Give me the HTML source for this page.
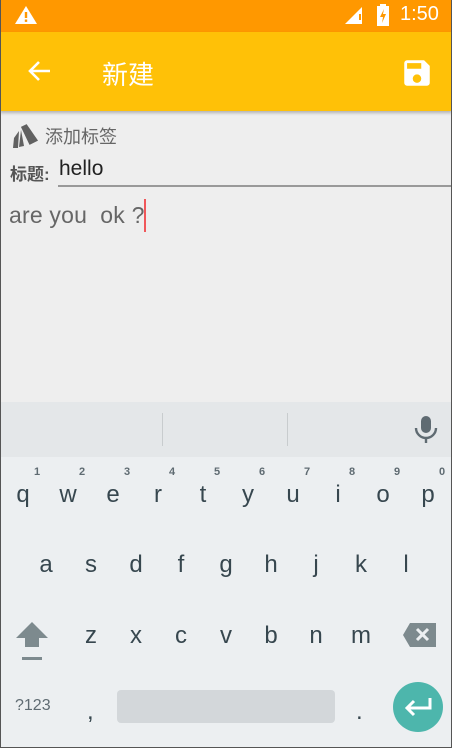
<!DOCTYPE html>
<html><head><meta charset="utf-8"><style>
body{margin:0;width:452px;height:748px;position:relative;overflow:hidden;background:#eeeeee;font-family:"Liberation Sans","Noto Sans CJK SC",sans-serif}
.a{position:absolute}
.k{position:absolute;width:40px;margin-left:-20px;text-align:center;font-size:24px;color:#37474f;line-height:1}
.n{position:absolute;width:20px;margin-left:-10px;text-align:center;font-size:11px;font-weight:bold;color:#5f6b72;line-height:1}
</style></head><body>
<div class="a" style="left:0;top:0;width:452px;height:32px;background:#ff9800"></div>
<svg class="a" style="left:14px;top:5px" width="24" height="20" viewBox="0 0 24 20"><path d="M12 1L23 19H1Z" fill="#fff"/><rect x="10.8" y="7" width="2.4" height="6" fill="#ff9800"/><rect x="10.8" y="14.5" width="2.4" height="2.4" fill="#ff9800"/></svg>
<svg class="a" style="left:345px;top:6px" width="20" height="20"><path d="M0 18L17 1V18Z" fill="#fff"/><rect x="14" y="8" width="2" height="6" fill="#ff9800"/></svg>
<svg class="a" style="left:376px;top:4px" width="14" height="22"><rect x="4" y="0" width="6" height="3" fill="#fff"/><rect x="1" y="2" width="12" height="20" fill="#fff"/><path d="M8 5L4 13H7L6 19L10 10H7Z" fill="#ff9800"/></svg>
<div class="a" style="left:400px;top:3px;font-size:20px;color:#fff">1:50</div>
<div class="a" style="left:0;top:32px;width:452px;height:79px;background:#ffc107;box-shadow:0 2px 3px rgba(0,0,0,.25)"></div>
<svg class="a" style="left:26px;top:59px" width="26" height="24" viewBox="0 0 26 24"><path d="M24 12H4M13 3L4 12L13 21" stroke="#fff" stroke-width="2.6" fill="none"/></svg>
<div class="a" style="left:102px;top:55px;font-size:26px;color:#fff">新建</div>
<svg class="a" style="left:400px;top:56px" width="34" height="34" viewBox="0 0 24 24"><path d="M17 3H5a2 2 0 0 0-2 2v14a2 2 0 0 0 2 2h14a2 2 0 0 0 2-2V7zM12 19a3 3 0 1 1 0-6 3 3 0 0 1 0 6zM15 9H5V5h10z" fill="#fff"/></svg>
<svg class="a" style="left:10px;top:120px" width="34" height="28"><path d="M12 6L18 4L27 22L18 25Z" fill="#616161" transform="rotate(-8 18 14)"/><path d="M4 18L9 11L8 28H3Z" fill="#616161"/><path d="M11 10L14 26L9 27Z" fill="#616161"/></svg>
<div class="a" style="left:45px;top:123px;font-size:18px;color:#666">添加标签</div>
<div class="a" style="left:10px;top:160px;font-size:17px;color:#555;font-weight:bold">标题:</div>
<div class="a" style="left:59px;top:157px;font-size:21px;color:#222">hello</div>
<div class="a" style="left:58px;top:185px;width:394px;height:2px;background:#999"></div>
<div class="a" style="left:9px;top:202px;font-size:23px;color:#666;letter-spacing:0.2px">are you &nbsp;ok ?</div>
<div class="a" style="left:144px;top:199px;width:2px;height:33px;background:#f0575a"></div>
<div class="a" style="left:0;top:402px;width:452px;height:55px;background:#e4e7e9"></div>
<div class="a" style="left:0;top:457px;width:452px;height:291px;background:#eceff1"></div>
<div class="a" style="left:162px;top:413px;width:1px;height:33px;background:#c8ccce"></div>
<div class="a" style="left:287px;top:413px;width:1px;height:33px;background:#c8ccce"></div>
<svg class="a" style="left:413px;top:415px" width="26" height="30" viewBox="0 0 26 30"><rect x="8" y="1" width="10" height="17" rx="5" fill="#5f6b72"/><path d="M3 13a10 10 0 0 0 20 0" stroke="#5f6b72" stroke-width="2.4" fill="none"/><rect x="11.8" y="22" width="2.4" height="6" fill="#5f6b72"/></svg>
<div class="n" style="left:37px;top:467px">1</div><div class="n" style="left:82px;top:467px">2</div><div class="n" style="left:127px;top:467px">3</div><div class="n" style="left:172px;top:467px">4</div><div class="n" style="left:217px;top:467px">5</div><div class="n" style="left:262px;top:467px">6</div><div class="n" style="left:307px;top:467px">7</div><div class="n" style="left:352px;top:467px">8</div><div class="n" style="left:397px;top:467px">9</div><div class="n" style="left:442px;top:467px">0</div>
<div class="k" style="left:23px;top:483px">q</div><div class="k" style="left:68px;top:483px">w</div><div class="k" style="left:113px;top:483px">e</div><div class="k" style="left:158px;top:483px">r</div><div class="k" style="left:203px;top:483px">t</div><div class="k" style="left:248px;top:483px">y</div><div class="k" style="left:293px;top:483px">u</div><div class="k" style="left:338px;top:483px">i</div><div class="k" style="left:383px;top:483px">o</div><div class="k" style="left:428px;top:483px">p</div>
<div class="k" style="left:46px;top:553px">a</div><div class="k" style="left:91px;top:553px">s</div><div class="k" style="left:136px;top:553px">d</div><div class="k" style="left:181px;top:553px">f</div><div class="k" style="left:226px;top:553px">g</div><div class="k" style="left:271px;top:553px">h</div><div class="k" style="left:316px;top:553px">j</div><div class="k" style="left:361px;top:553px">k</div><div class="k" style="left:406px;top:553px">l</div>
<div class="k" style="left:91px;top:624px">z</div><div class="k" style="left:136px;top:624px">x</div><div class="k" style="left:181px;top:624px">c</div><div class="k" style="left:226px;top:624px">v</div><div class="k" style="left:271px;top:624px">b</div><div class="k" style="left:316px;top:624px">n</div><div class="k" style="left:361px;top:624px">m</div>
<svg class="a" style="left:15px;top:621px" width="34" height="40"><path d="M17 1L33 17H24V26H10V17H1Z" fill="#7d8a8e"/><rect x="7" y="36" width="20" height="3" fill="#7d8a8e"/></svg>
<svg class="a" style="left:402px;top:622px" width="35" height="26"><path d="M8 1H34V25H8L1 13Z" fill="#7d8a8e"/><path d="M15 7L26 18M26 7L15 18" stroke="#eceff1" stroke-width="3"/></svg>
<div class="a" style="left:15px;top:697px;font-size:16px;color:#5f6b72">?123</div>
<div class="a" style="left:87px;top:698px;font-size:24px;color:#37474f">,</div>
<div class="a" style="left:117px;top:690px;width:218px;height:33px;background:#d3d7da;border-radius:4px"></div>
<div class="a" style="left:356px;top:698px;font-size:24px;color:#37474f">.</div>
<div class="a" style="left:393px;top:682px;width:50px;height:50px;border-radius:50%;background:#4db6ac"></div>
<svg class="a" style="left:402px;top:696px" width="32" height="22"><path d="M28 2V12H6M12 5L5 12L12 19" stroke="#fff" stroke-width="3" fill="none"/></svg>
<div class="a" style="left:0;top:0;width:1px;height:748px;background:#555"></div>
<div class="a" style="left:451px;top:0;width:1px;height:748px;background:#555"></div>
<div class="a" style="left:0;top:747px;width:452px;height:1px;background:#555"></div>
</body></html>
